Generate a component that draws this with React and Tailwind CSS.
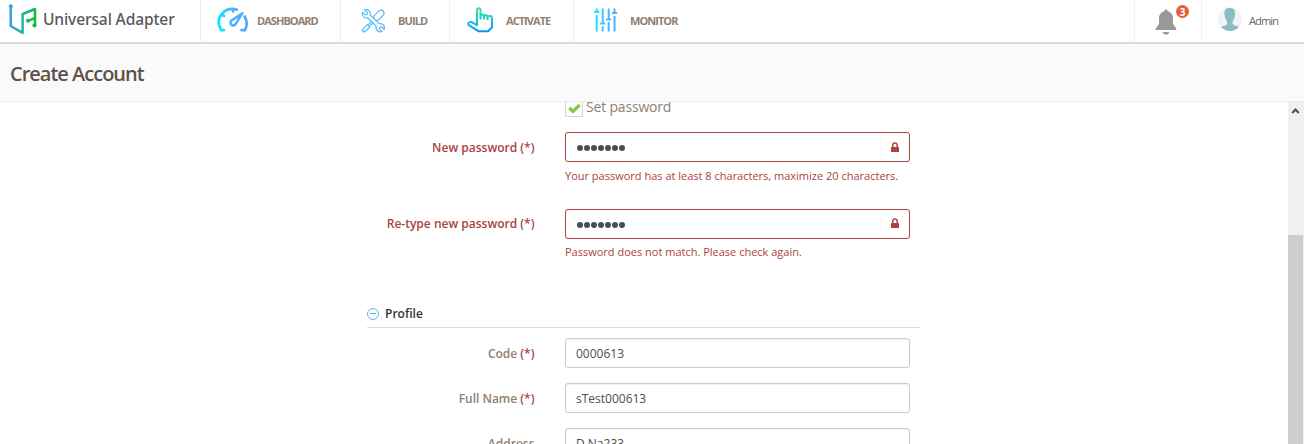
import React from "react";

function Logo() {
  return (
    <svg className="h-9 w-10 shrink-0" viewBox="0 0 40 36" fill="none">
      <defs>
        <linearGradient id="logo" gradientUnits="userSpaceOnUse" x1="10" y1="0" x2="36" y2="0">
          <stop offset="0" stopColor="#3b9fdc" />
          <stop offset="0.5" stopColor="#1fb59c" />
          <stop offset="1" stopColor="#12b84a" />
        </linearGradient>
      </defs>
      <path d="M10.7 6.5V26L22.6 32.8V14L35 9V25" stroke="url(#logo)" strokeWidth="2.5" strokeLinejoin="round" />
      <path d="M28 21L35 17.8" stroke="#12b84a" strokeWidth="2.4" />
      <circle cx="10.8" cy="6.2" r="2" fill="#3b9fdc" />
      <circle cx="28" cy="20.8" r="2" fill="#12b84a" />
      <circle cx="34.5" cy="25.5" r="2.1" fill="#12b84a" />
    </svg>
  );
}

function GaugeIcon() {
  return (
    <svg className="mb-[2px] h-[26px] w-[32px]" viewBox="0 0 32 26" fill="none" strokeLinecap="round">
      <defs>
        <linearGradient id="gauge" gradientUnits="userSpaceOnUse" x1="1" y1="0" x2="30" y2="0">
          <stop offset="0" stopColor="#0ee8fc" />
          <stop offset="0.55" stopColor="#4facfe" />
          <stop offset="1" stopColor="#4facfe" />
        </linearGradient>
      </defs>
      <g stroke="url(#gauge)" strokeWidth="2.7">
        <path d="M6.8 23.2H4.2Q-1.2 13.5 4.8 6.9Q11 .2 19.8 2.6M7 8.9L4.8 6.9M16 2V4.4M27.7 9.5Q31.5 16.5 28 23.2H24.6" />
        <path d="M25.4 6.2L18.9 16.6A2.8 2.8 0 1 1 14.9 13.2Z" strokeWidth="2.5" strokeLinejoin="round" />
      </g>
    </svg>
  );
}

function ToolsIcon() {
  return (
    <svg className="mb-px h-[24px] w-[25px]" viewBox="0 0 25 25" fill="none" stroke="url(#tools)" strokeWidth="1.25" strokeLinejoin="round">
      <defs>
        <linearGradient id="tools" gradientUnits="userSpaceOnUse" x1="0" y1="0" x2="25" y2="0">
          <stop offset="0" stopColor="#40c8fb" />
          <stop offset="1" stopColor="#5cb2fb" />
        </linearGradient>
      </defs>
      <path d="M3.2 1.2L6.2 3.8 5.7 5.7 3.8 6.2 1.2 3.5Q.1 7.5 3 8.9Q4.8 9.7 6.4 9.1L15.3 18Q14.7 20.8 16.3 22.4Q18.5 24.7 21.4 23.5L18.6 20.7 19 19 20.8 18.5 23.6 21.3Q24.6 17.8 22.3 16.2Q20.4 14.8 18.1 15.3L9.2 6.4Q10 3.8 8 1.9Q5.8 0 3.2 1.2Z" />
      <path d="M13.2 9.8L12.7 7.4 18.5 1.7Q20.5 .3 22.6 2.1Q24.3 4.3 22.8 6.2L17.1 11.9 15.4 11.6M10.5 13L7.2 16.3M12 14.5L8.7 17.8M6.3 16.2L8.8 18.7 5.1 22.4 2.3 24 .8 22.5 2.5 20Z" />
    </svg>
  );
}

function HandIcon() {
  return (
    <svg className="mb-[2px] h-[26px] w-[26px]" viewBox="0 0 26 26" fill="none">
      <defs>
        <linearGradient id="hand" gradientUnits="userSpaceOnUse" x1="0" y1="0" x2="0" y2="25">
          <stop offset="0" stopColor="#30e59c" />
          <stop offset="0.5" stopColor="#16ccc9" />
          <stop offset="1" stopColor="#0993f4" />
        </linearGradient>
      </defs>
      <path d="M10 17.2V3.1Q10 1.2 11.8 1.2T13.5 3.1V11.5V8.2Q15 6.8 17 8.2V11.5V8.7Q19 7.5 20.5 9V12V9.5Q25 7.9 25 11.7V20.2L21.2 24.2H11.5L2.2 18.3Q.2 16.9 2 15.5Q4 14.3 6.5 16.2L10 18.2" stroke="url(#hand)" strokeWidth="2" strokeLinecap="round" strokeLinejoin="round" />
    </svg>
  );
}

function SlidersIcon() {
  return (
    <svg className="mb-[2px] h-[24px] w-[24px]" viewBox="0 0 24 24" fill="none" stroke="url(#sliders)" strokeWidth="2">
      <defs>
        <linearGradient id="sliders" gradientUnits="userSpaceOnUse" x1="0" y1="0" x2="24" y2="0">
          <stop offset="0" stopColor="#0eeefe" />
          <stop offset="0.6" stopColor="#4db3ff" />
          <stop offset="1" stopColor="#4facfe" />
        </linearGradient>
      </defs>
      <path d="M2.7 .5V3M2.7 7V23.5M.2 3.9H5.2M8.7 .5V14.5M8.7 18V23.5M6.2 15.5H11.2M14.7 .5V10.5M14.7 14V23.5M12.2 11.5H17.2M20.5 .5V4M20.5 8V23.5M18 5H23" />
    </svg>
  );
}

function Lock() {
  return (
    <svg className="h-[11px] w-[8px]" viewBox="0 0 8 11" fill="none">
      <path d="M1.8 5.5V3.3A2.2 2.2 0 0 1 6.2 3.3V5.5" stroke="#a94442" strokeWidth="1.5" />
      <rect y="5" width="8" height="5" rx=".6" fill="#a94442" />
    </svg>
  );
}

function NavItem({ icon, label, className }) {
  return (
    <a className={"flex h-[42px] items-center border-l border-[#f1eeee] text-[11px] font-bold text-[#8f8070] " + className}>
      {icon}
      <span className="whitespace-nowrap">{label}</span>
    </a>
  );
}

function PasswordRow({ label, message }) {
  return (
    <div className="flex h-[76.5px] shrink-0">
      <label className="w-[534.5px] pt-[6.8px] text-right text-[12px] leading-[18px] font-semibold text-[#a94442]">{label}</label>
      <div className="ml-[30.5px] w-[345px]">
        <div className="flex h-[30px] items-center rounded-[3px] border border-[#a94442] pl-[10.5px]">
          <div className="mt-[2px] flex gap-px">
            {[0, 1, 2, 3, 4, 5, 6].map((i) => (
              <span key={i} className="h-[6px] w-[6px] rounded-full bg-[#4d4d4d]" />
            ))}
          </div>
          <div className="ml-auto flex h-full w-[29px] items-center justify-center border-l border-[#fafafa]">
            <Lock />
          </div>
        </div>
        <p className="mt-[5.8px] text-[11px] leading-[16px] whitespace-nowrap text-[#a94442]">{message}</p>
      </div>
    </div>
  );
}

function ProfileRow({ label, required, value }) {
  return (
    <div className="flex h-[45px] shrink-0">
      <label className="w-[534.5px] pt-[7px] text-right text-[12px] leading-[18px] font-semibold text-[#8f8070]">
        {label}
        {required && <span className="text-[#a94442]"> (*)</span>}
      </label>
      <div className="ml-[30.5px] flex h-[30px] w-[345px] items-center rounded-[3px] border border-[#ccc] pt-[2px] pl-[10px] text-[12px] text-[#4d4d4d] shadow-[inset_0_1px_1px_rgba(0,0,0,0.06)]">
        {value}
      </div>
    </div>
  );
}

export default function App() {
  return (
    <div className="flex h-[444px] w-[1304px] flex-col overflow-hidden bg-white font-['Open_Sans',sans-serif]">
      <header className="flex h-[44px] shrink-0 border-b-2 border-[#dcdcdc]">
        <div className="flex h-[42px] w-[200px] items-start">
          <Logo />
          <span className="ml-[3px] pt-[7px] font-['Noto_Sans',sans-serif] text-[15.6px] leading-[24px] font-medium tracking-[-0.14px] whitespace-nowrap text-[#58595b]">Universal Adapter</span>
        </div>
        <NavItem className="w-[140px] gap-[8px] pl-[16px] tracking-[-0.95px]" icon={<GaugeIcon />} label="DASHBOARD" />
        <NavItem className="w-[109px] gap-[12px] pl-[20px] tracking-[-0.9px]" icon={<ToolsIcon />} label="BUILD" />
        <NavItem className="w-[124px] gap-[13px] pl-[17px] tracking-[-0.95px]" icon={<HandIcon />} label="ACTIVATE" />
        <NavItem className="w-[140px] gap-[12px] pl-[20px] tracking-[-0.95px]" icon={<SlidersIcon />} label="MONITOR" />
        <div className="ml-auto flex h-[42px] w-[67px] border-l border-[#f3eded] pt-[9px] pl-[20px]">
          <div className="relative h-[26px] w-[22px]">
            <svg className="h-[26px] w-[22px]" viewBox="0 0 22 26" fill="#999">
              <path d="M9.5 2Q9.5 .2 11 .2T12.5 2Q18 3.5 18 9.5V15L21.3 19.5V21H.7V19.5L4 15V9.5Q4 3.5 9.5 2ZM7.6 23H14.4Q13.6 25.8 11 25.8T7.6 23Z" />
            </svg>
            <span className="absolute -top-[4px] left-[21px] flex h-[13px] w-[13px] items-center justify-center rounded-full bg-[#e65f3c] text-[10px] leading-none font-bold text-white">3</span>
          </div>
        </div>
        <div className="flex h-[40px] w-[103px] border-l border-[#eee] pt-[7px] pl-[16px]">
          <svg className="h-[24px] w-[24px] shrink-0" viewBox="0 0 24 24">
            <circle cx="12" cy="12" r="12" fill="#f3f3f3" />
            <path d="M6.5 7C6 2.5 8.5 1 11.8 1S17.6 2.5 17 7Q17 12 14.6 14.5V17Q15.5 18.5 19.5 19.2L21 20Q17 24 12 24T3 20L4.5 19.2Q8.5 18.5 9 17V14.5Q6.7 12 6.5 7Z" fill="#8abdc0" />
          </svg>
          <span className="ml-[7px] pt-[6px] text-[11px] leading-[16px] tracking-[-0.85px] text-[#666]">Admin</span>
        </div>
      </header>
      <div className="flex h-[58px] shrink-0 items-center border-b border-[#ececec] bg-[#f9fafc] pt-[3px] pl-[10px]">
        <h1 className="text-[20px] leading-[28px] font-semibold tracking-[-1px] text-[#5e5246]">Create Account</h1>
      </div>
      <div className="flex min-h-0 flex-1">
        <main className="flex min-w-0 flex-1 flex-col overflow-hidden">
          <div className="-mt-[3px] flex h-[33px] shrink-0 pl-[565px]">
            <div className="flex h-[18px] w-[18px] items-center justify-center border border-[#d5d5d5]">
              <svg className="h-[11px] w-[13px]" viewBox="0 0 12 10" fill="none">
                <path d="M1.2 4.4L4.5 7.7L10.8 1.8" stroke="#8cc63f" strokeWidth="3" />
              </svg>
            </div>
            <span className="ml-[3px] -mt-[2px] text-[14px] leading-[20px] tracking-[-0.18px] text-[#8f8070]">Set password</span>
          </div>
          <PasswordRow label="New password (*)" message="Your password has at least 8 characters, maximize 20 characters." />
          <PasswordRow label="Re-type new password (*)" message="Password does not match. Please check again." />
          <div className="mt-[18px] ml-[367px] flex h-[25px] w-[553px] shrink-0 items-start gap-[6px] border-b border-[#dcdcdc]">
            <svg className="mt-[5px] h-[12px] w-[12px]" viewBox="0 0 12 12" fill="none" stroke="#5bb5e8">
              <circle cx="6" cy="6" r="5.5" />
              <path d="M3 5.5H9" />
            </svg>
            <h2 className="pt-px text-[12px] leading-[20px] font-semibold text-[#333]">Profile</h2>
          </div>
          <div className="flex flex-col pt-[10px]">
            <ProfileRow label="Code" required value="0000613" />
            <ProfileRow label="Full Name" required value="sTest000613" />
            <ProfileRow label="Address" value="D Na233" />
          </div>
        </main>
        <aside className="flex w-[16px] shrink-0 flex-col bg-[#f0f0f0]">
          <svg className="h-[17px] w-[16px]" viewBox="0 0 16 17" fill="none">
            <path d="M4.2 11L7.5 7.5L10.8 11" stroke="#505050" strokeWidth="2" />
          </svg>
          <div className="mt-[116px] w-[15px] flex-1 bg-[#cdcdcd]" />
        </aside>
      </div>
    </div>
  );
}
